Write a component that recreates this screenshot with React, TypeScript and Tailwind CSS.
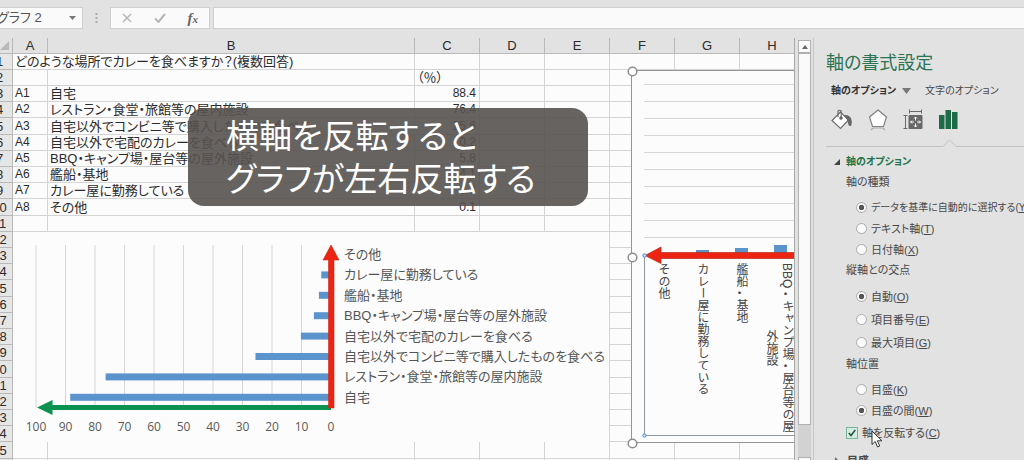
import type { ReactNode } from 'react';

const columns = ['A', 'B', 'C', 'D', 'E', 'F', 'G', 'H'];
const columnWidths = ['w-[26px]', 'w-[35px]', 'w-[367px]', 'w-[65px]', 'w-[65px]', 'w-[65px]', 'w-[65px]', 'w-[65px]', 'w-[65px]'];

const cells: Record<number, string[]> = {
  1: ['どのような場所でカレーを食べますか？(複数回答)'],
  2: ['', '', '（％）'],
  3: ['A1', '自宅', '88.4'],
  4: ['A2', 'レストラン・食堂・旅館等の屋内施設', '76.4'],
  5: ['A3', '自宅以外でコンビニ等で購入したものを食べる', '25.6'],
  6: ['A4', '自宅以外で宅配のカレーを食べる', '10.2'],
  7: ['A5', 'BBQ・キャンプ場・屋台等の屋外施設', '5.8'],
  8: ['A6', '艦船・基地', '4.1'],
  9: ['A7', 'カレー屋に勤務している', '3.3'],
  10: ['A8', 'その他', '0.1'],
};

const answers = [
  { label: 'その他', value: 0.1 },
  { label: 'カレー屋に勤務している', value: 3.3 },
  { label: '艦船・基地', value: 4.1 },
  { label: 'BBQ・キャンプ場・屋台等の屋外施設', value: 5.8 },
  { label: '自宅以外で宅配のカレーを食べる', value: 10.2 },
  { label: '自宅以外でコンビニ等で購入したものを食べる', value: 25.6 },
  { label: 'レストラン・食堂・旅館等の屋内施設', value: 76.4 },
  { label: '自宅', value: 88.4 },
];

function FormulaBar() {
  return (
    <div className="flex h-[38px] shrink-0 items-start overflow-hidden pt-[7px]">
      <div className="-ml-1 flex h-[22px] w-[87px] shrink-0 items-center border border-[#cfcfcf] bg-[#fafafa]">
        <input
          aria-label="名前ボックス"
          defaultValue="グラフ 2"
          className="w-full min-w-0 flex-1 bg-transparent text-[13px] text-[#555] outline-none"
        />
        <button aria-label="名前の一覧" className="flex w-5 justify-center">
          <svg width="7" height="4" viewBox="0 0 7 4"><path d="M0 0h7L3.500 4z" fill="#777" /></svg>
        </button>
      </div>
      <svg className="mx-3 shrink-0" width="3" height="22" viewBox="0 0 3 22">
        <path d="M.5 6h2v2h-2zM.5 10h2v2h-2zM.5 14h2v2h-2z" fill="#aaa" />
      </svg>
      <div className="flex h-[22px] w-[100px] shrink-0 items-center border border-[#cfcfcf] bg-[#fafafa]">
        <button aria-label="キャンセル" className="flex flex-1 justify-center">
          <svg width="10" height="10" viewBox="0 0 10 10"><path d="M1 1l8 8M9 1L1 9" stroke="#b5b5b5" strokeWidth="1.500" /></svg>
        </button>
        <button aria-label="入力" className="flex flex-1 justify-center">
          <svg width="12" height="10" viewBox="0 0 12 10"><path d="M1 5.500l3.500 3.500L11 1" fill="none" stroke="#b5b5b5" strokeWidth="2" /></svg>
        </button>
        <button aria-label="関数の挿入" className="flex-1 font-['Liberation_Serif',serif] text-[15px] leading-4 font-bold text-[#666] italic">
          f<span className="text-[11px]">x</span>
        </button>
      </div>
      <input aria-label="数式バー" className="ml-[3px] h-[22px] min-w-0 flex-1 border border-r-0 border-[#cfcfcf] bg-[#fafafa] outline-none" />
    </div>
  );
}

function SheetTable() {
  return (
    <table className="-ml-[13px] w-[818px] table-fixed border-separate border-spacing-0 text-xs leading-none text-[#2b2b2b]">
      <colgroup>
        {columnWidths.map((w, i) => <col key={i} className={w} />)}
      </colgroup>
      <thead>
        <tr className="h-4">
          <th className="border-r border-b border-[#b9b9b9] bg-[#e2e2e2] p-0">
            <svg className="ml-auto mr-[3px]" width="9" height="9" viewBox="0 0 9 9"><path d="M9 0v9H0z" fill="#b8b8b8" /></svg>
          </th>
          {columns.map((c) => (
            <th key={c} scope="col" className="border-r border-b border-[#b9b9b9] bg-[#e2e2e2] p-0 text-[13px] leading-[15px] font-normal">{c}</th>
          ))}
        </tr>
      </thead>
      <tbody className="[&>tr]:h-4 [&>tr:nth-child(5n)]:h-[17px]">
        {Array.from({ length: 26 }, (_, i) => i + 1).map((row) => (
          <tr key={row}>
            <th scope="row" className="border-r border-b border-[#b9b9b9] bg-[#e6e6e6] p-0 text-[13px] leading-[15px] font-normal">{row}</th>
            {row === 1 ? (
              <td colSpan={2} className="border-r border-b border-[#d4d4d4] p-0 pl-0.5 text-[13px] leading-[15px] whitespace-nowrap">{cells[1][0]}</td>
            ) : (
              <>
                <td className="border-r border-b border-[#d4d4d4] p-0 pl-0.5 leading-[15px]">{cells[row]?.[0]}</td>
                <td className="border-r border-b border-[#d4d4d4] p-0 pl-0.5 text-[13px] leading-[15px] whitespace-nowrap">{cells[row]?.[1]}</td>
              </>
            )}
            <td className={row === 2 ? 'border-r border-b border-[#d4d4d4] p-0 pl-0.5 text-[13px] leading-[15px]' : 'border-r border-b border-[#d4d4d4] p-0 pr-[3px] text-right leading-[15px]'}>
              {cells[row]?.[2]}
            </td>
            {columns.slice(3).map((c) => <td key={c} className="border-r border-b border-[#d4d4d4] p-0" />)}
          </tr>
        ))}
      </tbody>
    </table>
  );
}

function BarChart() {
  const zero = 318;
  const unit = 2.95;
  return (
    <svg className="absolute top-[194px] left-[13px] bg-[#fcfcfc]" width="596" height="210" viewBox="0 0 596 210" role="img">
      {Array.from({ length: 11 }, (_, i) => {
        const x = zero - i * 10 * unit;
        return (
          <g key={i}>
            <path d={`M${x} 13V176`} stroke="#d6d6d6" />
            <text x={x} y="199" textAnchor="middle" className="fill-[#595959] font-['Open_Sans',sans-serif] text-xs">{i * 10}</text>
          </g>
        );
      })}
      {answers.map((a, i) => {
        const y = 22 + i * 20.400;
        return (
          <g key={a.label}>
            {i > 0 && <rect x={zero - a.value * unit} y={y - 3} width={a.value * unit} height="7" fill="#5b93cc" />}
            <text x="331" y={y + 5} className="fill-[#555] text-[13px]">{a.label}</text>
          </g>
        );
      })}
      <path d="M24 175.500L39.500 168v5H318v5H39.500v5z" fill="#0b9150" />
      <path d="M318 13l8 15h-5V176h-5.500V28H310z" fill="#ee2412" stroke="#c92a18" strokeWidth=".6" />
    </svg>
  );
}

function SelectedChart() {
  return (
    <div className="absolute top-8 left-[631px] h-[373px] w-[340px] border border-[#959595] bg-[#fcfcfc] text-xs leading-4 text-[#444]">
      <svg className="absolute -top-[7px] -left-[7px]" width="340" height="390" viewBox="0 0 340 390" role="img">
        {Array.from({ length: 10 }, (_, i) => <path key={i} d={`M19 ${20.500 + i * 17}H340`} stroke="#d6d6d6" />)}
        <path d="M19.500 191V371.500H340" fill="none" stroke="#8e979e" />
        <path d="M71 186h13v5H71zM110 184h13v7h-13zM149 181h13v10h-13z" fill="#5b93cc" />
        <path d="M20 191.500L36 183v5.500H340v6H36v5z" fill="#ee2412" stroke="#b92c1c" strokeWidth=".7" />
        <g fill="#fff" stroke="#8c8c8c" strokeWidth="1.500">
          <circle cx="7.500" cy="7.500" r="4.300" /><circle cx="7.500" cy="193.500" r="4.300" /><circle cx="7.500" cy="379.500" r="4.300" />
        </g>
        <g fill="#cfe3f7" stroke="#4b8ac9">
          <circle cx="19.500" cy="191.500" r="1.700" /><circle cx="19.500" cy="371.500" r="1.700" />
        </g>
      </svg>
      <p className="absolute top-48 left-[23px] [writing-mode:vertical-rl]">その他</p>
      <p className="absolute top-48 left-[62px] whitespace-nowrap [writing-mode:vertical-rl]">カレー屋に勤務している</p>
      <p className="absolute top-48 left-[101px] whitespace-nowrap [writing-mode:vertical-rl]">艦船・基地</p>
      <p className="absolute top-48 left-[131px] flex flex-col items-center whitespace-nowrap [writing-mode:vertical-rl]">
        <span>BBQ・キャンプ場・屋台等の屋</span>
        <span>外施設</span>
      </p>
    </div>
  );
}

function Key({ children }: { children: string }) {
  return <>(<span className="underline">{children}</span>)</>;
}

function Radio({ name, checked, small, hotkey, children }: { name: string; checked?: boolean; small?: boolean; hotkey: string; children: ReactNode }) {
  return (
    <label className="flex flex-1 items-center gap-1 whitespace-nowrap">
      <input
        type="radio"
        name={name}
        defaultChecked={checked}
        className="size-[11px] shrink-0 appearance-none rounded-full border border-[#aaa] bg-[#fbfbfb] checked:bg-[radial-gradient(circle,#555_0_2.5px,#fbfbfb_3px)]"
      />
      <span className={small ? 'text-[10px]' : ''}>{children}<Key>{hotkey}</Key></span>
    </label>
  );
}

function FormatPane() {
  return (
    <aside className="flex w-[211px] shrink-0 flex-col overflow-hidden border-l border-[#c6c6c6] pl-3 text-[11px] leading-5 text-[#484848]">
      <h2 className="mt-[13px] text-lg leading-6 whitespace-nowrap text-[#2c7352]">軸の書式設定</h2>
      <div className="mt-1.5 flex items-center pl-[5px] text-[10px] whitespace-nowrap">
        <button className="flex items-center gap-1.5 font-bold text-[#333]">
          軸のオプション
          <svg width="9" height="6" viewBox="0 0 9 6"><path d="M0 0h9L4.500 6z" fill="#777" /></svg>
        </button>
        <button className="ml-3.5">文字のオプション</button>
      </div>
      <div className="mt-2 flex h-[22px] items-center gap-[15px] pl-[5px]">
        <button aria-label="塗りつぶしと線">
          <svg width="22" height="22" viewBox="0 0 22 22" fill="none" stroke="#686868" strokeWidth="1.100">
            <path d="M9.500 3L1 11.500l8.500 8L17.500 11z" fill="#fff" />
            <path d="M7 8V2.500C7 .8 10.200.8 10.200 2.500v7" />
            <circle cx="10" cy="9" r="1.200" fill="#686868" />
            <path d="M14 6.500c5-.5 7 4 6 9-.3 1.200-1.800 1.200-2.200-.5-.5-3-.3-5-3.800-8.500z" fill="#686868" />
          </svg>
        </button>
        <button aria-label="効果">
          <svg width="20" height="22" viewBox="0 0 20 22" fill="none" stroke="#808080" strokeWidth="1.200">
            <path d="M10 1l8.500 7-3 9.500h-11l-3-9.500z" fill="#fff" />
            <path d="M5 19h10l2 2M5 19l-2 2" stroke="#aaa" />
          </svg>
        </button>
        <button aria-label="サイズとプロパティ">
          <svg width="20" height="22" viewBox="0 0 20 22" fill="none" stroke="#686868">
            <path d="M6 2.500h13M6.500.5v4M18.500.5v4M2.500 7v12M.5 6.500h4M.5 19.500h4" />
            <path d="M6 6.500h13v13H6z" fill="#686868" />
            <path d="M12.500 8v3.500m0 3V18M7.500 13h3.500m3 0h3.500M11 9.500L12.500 8 14 9.500M11 16.500l1.500 1.500 1.500-1.500M9 11.500L7.500 13 9 14.500M16 11.500l1.500 1.500-1.500 1.500" stroke="#fff" />
          </svg>
        </button>
        <button aria-label="軸のオプション" aria-pressed="true">
          <svg width="20" height="22" viewBox="0 0 20 22" fill="#1d6b47">
            <path d="M1 6h5.500v14H1zM7.500 1h5.500v19H7.500zM14 3h5.500v17h-5.500z" />
          </svg>
        </button>
      </div>
      <svg className="mt-2 w-[300px] shrink-0" height="8" viewBox="0 0 300 8">
        <path d="M0 7.500h117l6.500-6.500 6.500 6.500H300" fill="none" stroke="#c2c2c2" />
      </svg>
      <h3 className="mt-[5px] flex shrink-0 items-center gap-1.5 pl-2 text-[10px] font-bold text-[#217346]">
        <svg width="6" height="6" viewBox="0 0 6 6"><path d="M6 0v6H0z" fill="#444" /></svg>
        軸のオプション
      </h3>
      <fieldset className="shrink-0 pl-5">
        <legend>軸の種類</legend>
        <div className="flex h-[68px] flex-col pt-[5px] pl-[10px]">
          <Radio name="axis" checked small hotkey="Y">データを基準に自動的に選択する</Radio>
          <Radio name="axis" hotkey="T">テキスト軸</Radio>
          <Radio name="axis" hotkey="X">日付軸</Radio>
        </div>
      </fieldset>
      <fieldset className="shrink-0 pl-5">
        <legend>縦軸との交点</legend>
        <div className="flex h-[74px] flex-col pt-[5px] pl-[10px]">
          <Radio name="cross" checked hotkey="O">自動</Radio>
          <Radio name="cross" hotkey="E">項目番号</Radio>
          <Radio name="cross" hotkey="G">最大項目</Radio>
        </div>
      </fieldset>
      <fieldset className="shrink-0 pl-5">
        <legend>軸位置</legend>
        <div className="flex h-[47px] flex-col pt-[5px] pl-[10px]">
          <Radio name="position" hotkey="K">目盛</Radio>
          <Radio name="position" checked hotkey="W">目盛の間</Radio>
        </div>
      </fieldset>
      <label className="relative flex h-[23px] shrink-0 items-center gap-1 pl-5 whitespace-nowrap">
        <input type="checkbox" defaultChecked className="peer size-3 shrink-0 appearance-none border border-[#79b598] bg-[#d3ecdf]" />
        <svg className="pointer-events-none absolute left-[22px] hidden peer-checked:block" width="8" height="8" viewBox="0 0 8 8">
          <path d="M.8 4l2.200 2.500L7.300 1" fill="none" stroke="#24523c" strokeWidth="1.500" />
        </svg>
        <span>軸を反転する<Key>C</Key></span>
        <svg className="pointer-events-none absolute top-[9px] left-[45px]" width="12" height="18" viewBox="0 0 12 18">
          <path d="M1 1v13.500l3.200-3 2.300 5.500 2.200-1-2.300-5.200H11z" fill="#fff" stroke="#333" />
        </svg>
      </label>
      <h3 className="mt-[7px] flex shrink-0 items-center gap-[7px] pl-2 font-bold">
        <svg width="6" height="8" viewBox="0 0 6 8"><path d="M1 0l4 4-4 4z" fill="#666" /></svg>
        目盛
      </h3>
    </aside>
  );
}

export default function App() {
  return (
    <div className="flex h-screen flex-col overflow-hidden bg-[#e2e2e2] font-['Liberation_Sans','Noto_Sans_CJK_JP',sans-serif] [font-feature-settings:'palt']">
      <FormulaBar />
      <div className="flex min-h-0 flex-1">
        <main className="relative min-w-0 flex-1 overflow-hidden border-r border-[#a8a8a8] bg-[#fcfcfc]">
          <SheetTable />
          <BarChart />
          <SelectedChart />
          <div className="absolute top-[70px] left-[188px] h-[98px] w-[400px] rounded-2xl bg-[#57524f]/90 pt-[7px] pl-[38px] text-[33px] leading-[43px] whitespace-nowrap text-white">
            <p>横軸を反転すると</p>
            <p>グラフが左右反転する</p>
          </div>
        </main>
        <div className="flex w-[18px] shrink-0 flex-col pt-0.5 pr-0.5 pl-[3px]">
          <button aria-label="上へスクロール" className="flex h-[13px] shrink-0 items-center justify-center border border-[#b0b0b0] bg-[#fafafa]">
            <svg width="6" height="4" viewBox="0 0 6 4"><path d="M3 0l3 4H0z" fill="#666" /></svg>
          </button>
          <div className="flex-1 border border-[#b0b0b0] bg-[#fafafa]" />
          <div className="h-8 shrink-0 bg-[#d2d2d2]" />
          <div className="h-[3px] shrink-0 border border-b-0 border-[#b0b0b0] bg-[#fafafa]" />
        </div>
        <FormatPane />
      </div>
    </div>
  );
}
